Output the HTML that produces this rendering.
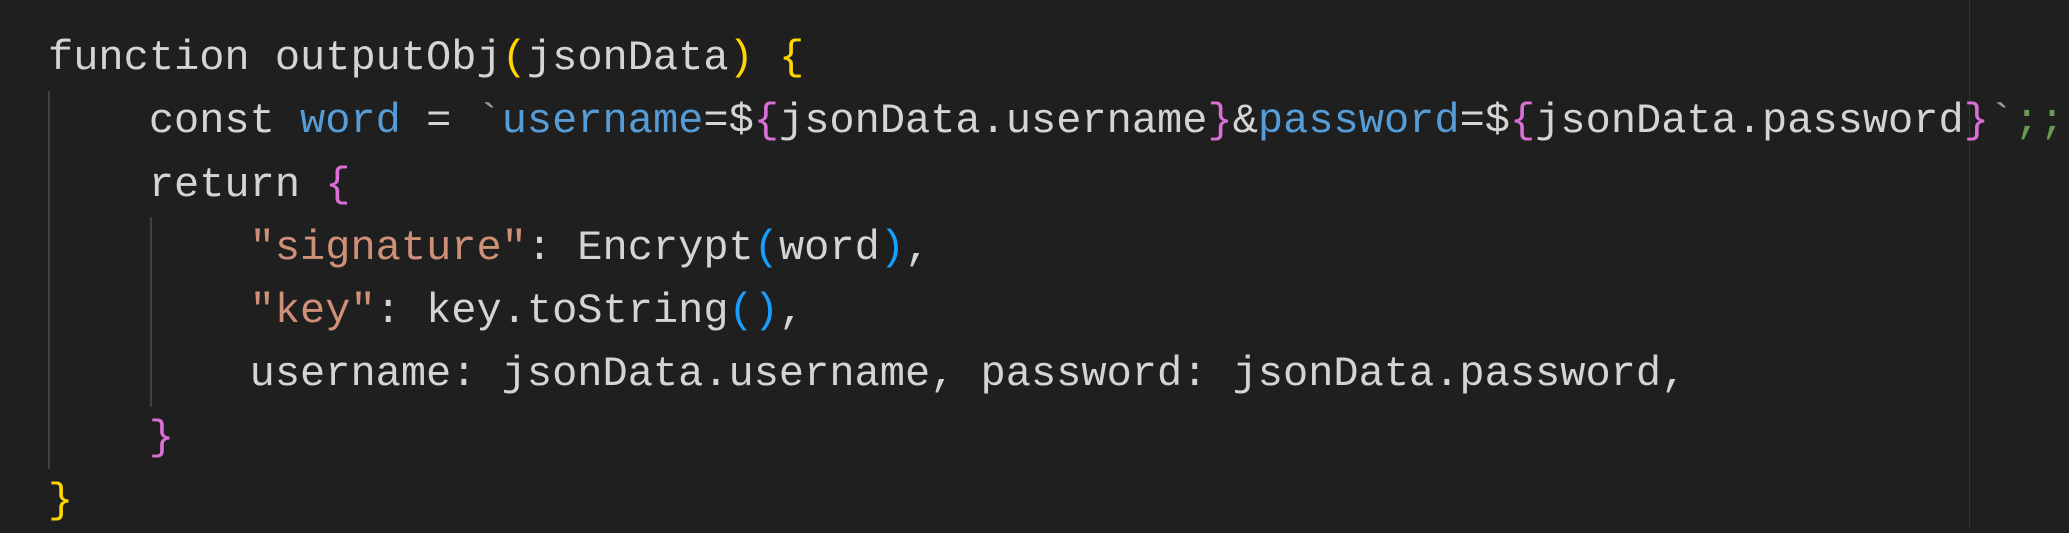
<!DOCTYPE html>
<html><head><meta charset="utf-8"><style>
html,body{margin:0;padding:0;background:#1f1f1f;width:2069px;height:527px;overflow:hidden}
pre{margin:0;position:absolute;left:48px;top:27px;font-family:"Liberation Mono",monospace;font-size:42px;line-height:63.3px;color:#d4d4d4;white-space:pre}
.b{color:#569cd6}.y{color:#ffd700}.p{color:#da70d6}.c{color:#179fff}.s{color:#ce9178}.g{color:#6a9955}.t{color:#9a9a9a}
.guide{position:absolute;width:2px;background:#404040}
</style></head><body>
<div class="guide" style="left:48px;top:91px;height:378px"></div>
<div class="guide" style="left:150px;top:217px;height:190px"></div>
<div style="position:absolute;left:1969px;top:0;width:1px;height:527px;background:#2a3a2a"></div>
<pre>function outputObj<span class="y">(</span>jsonData<span class="y">)</span> <span class="y">{</span>
    const <span class="b">word</span> = <span class="t">`</span><span class="b">username</span>=$<span class="p">{</span>jsonData.username<span class="p">}</span>&amp;<span class="b">password</span>=$<span class="p">{</span>jsonData.password<span class="p">}</span><span class="t">`</span><span class="g">;;</span>
    return <span class="p">{</span>
        <span class="s">"signature"</span>: Encrypt<span class="c">(</span>word<span class="c">)</span>,
        <span class="s">"key"</span>: key.toString<span class="c">()</span>,
        username: jsonData.username, password: jsonData.password,
    <span class="p">}</span>
<span class="y">}</span></pre>
</body></html>
